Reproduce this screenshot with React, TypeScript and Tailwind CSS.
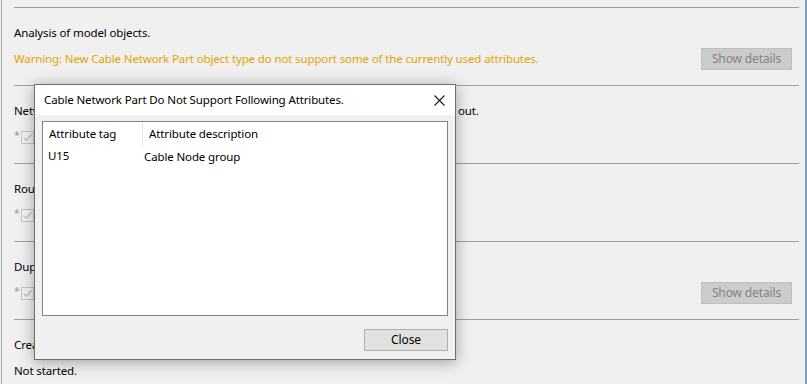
const font = { fontFamily: '"Noto Sans", "Open Sans", sans-serif', letterSpacing: '-0.13px' };

const Divider = () => <div className="h-px bg-[#a0a0a0] mr-[7px]" />;

const FakeCheck = () => (
  <div className="flex items-center h-[22px]">
    <span className="text-[10px] text-[#9a9a9a] w-[7px] -mt-1">*</span>
    <div className="w-[13px] h-[13px] border border-[#c5c5c5] bg-[#f4f4f4] flex items-center justify-center">
      <svg width="11" height="11" viewBox="0 0 11 11">
        <path d="M1.5 5.5 L4.2 8.2 L9.5 2.5" fill="none" stroke="#c2c2c2" strokeWidth="1.3" />
      </svg>
    </div>
  </div>
);

const ShowDetails = () => (
  <button className="w-[91px] h-[22px] bg-[#cccccc] border border-[#bfbfbf] text-[#838383] text-[12px] leading-none mr-[14px]">
    Show details
  </button>
);

const Section = ({ title, children }: { title: React.ReactNode; children: React.ReactNode }) => (
  <div>
    <Divider />
    <div className="h-[77px] pt-[15px]">
      <div className="h-5 flex items-center">{title}</div>
      <div className="mt-[5px] h-[22px] flex items-center justify-between">{children}</div>
    </div>
  </div>
);

export default function App() {
  return (
    <div className="relative w-[807px] h-[384px] bg-[#f0f0f0] overflow-hidden text-[11.5px] text-black" style={font}>
      <div className="absolute left-px top-0 bottom-0 w-px bg-[#a8a8a8]" />
      <div className="absolute left-[805px] top-0 bottom-0 w-[2px] bg-[#7f9fc8]" />

      <div className="pl-[14px] pr-[1px] pt-[7px]">
        <Section title="Analysis of model objects.">
          <span className="text-[#e0a400]">
            Warning: New Cable Network Part object type do not support some of the currently used attributes.
          </span>
          <ShowDetails />
        </Section>
        <Section
          title={
            <>
              <span className="inline-block w-[444px] overflow-hidden whitespace-nowrap">
                Network structure analysis of model objects. Some unused attributes will be left
              </span>
              <span>out.</span>
            </>
          }
        >
          <FakeCheck />
        </Section>
        <Section title="Route analysis.">
          <FakeCheck />
        </Section>
        <Section title="Duplicate analysis.">
          <FakeCheck />
          <ShowDetails />
        </Section>
        <div>
          <Divider />
          <div className="pt-[15px]">
            <div className="h-5 flex items-center">Create new objects.</div>
            <div className="mt-[5px] h-[22px] flex items-center">Not started.</div>
          </div>
        </div>
      </div>

      {/* dialog */}
      <div className="absolute left-[34px] top-[84px] w-[422px] h-[276px] bg-[#f0f0f0] border border-[#6f6f6f] shadow-[0_2px_14px_rgba(0,0,0,0.35)] flex flex-col">
        <div className="h-[30px] bg-white flex items-center justify-between pl-[9px] pr-[10px]">
          <span>Cable Network Part Do Not Support Following Attributes.</span>
          <svg width="11" height="11" viewBox="0 0 11 11">
            <path d="M0.5 0.5 L10.5 10.5 M10.5 0.5 L0.5 10.5" stroke="#1a1a1a" strokeWidth="1.1" />
          </svg>
        </div>
        <div className="mx-[7px] mt-[6px] h-[195px] bg-white border border-[#828282]">
          <div className="flex h-[24px] items-center">
            <div className="w-[100px] pl-[6px] h-full flex items-center border-r border-[#e5e5e5]">Attribute tag</div>
            <div className="pl-[6px]">Attribute description</div>
          </div>
          <div className="flex h-[20px] items-center">
            <div className="w-[100px] pl-[5px]">U15</div>
            <div className="pl-[1px] mt-[2px]">Cable Node group</div>
          </div>
        </div>
        <div className="flex justify-end mt-[13px] mr-[7px]">
          <button className="w-[84px] h-[22px] bg-[#e1e1e1] border border-[#adadad] text-[12px] leading-none">Close</button>
        </div>
      </div>
    </div>
  );
}
